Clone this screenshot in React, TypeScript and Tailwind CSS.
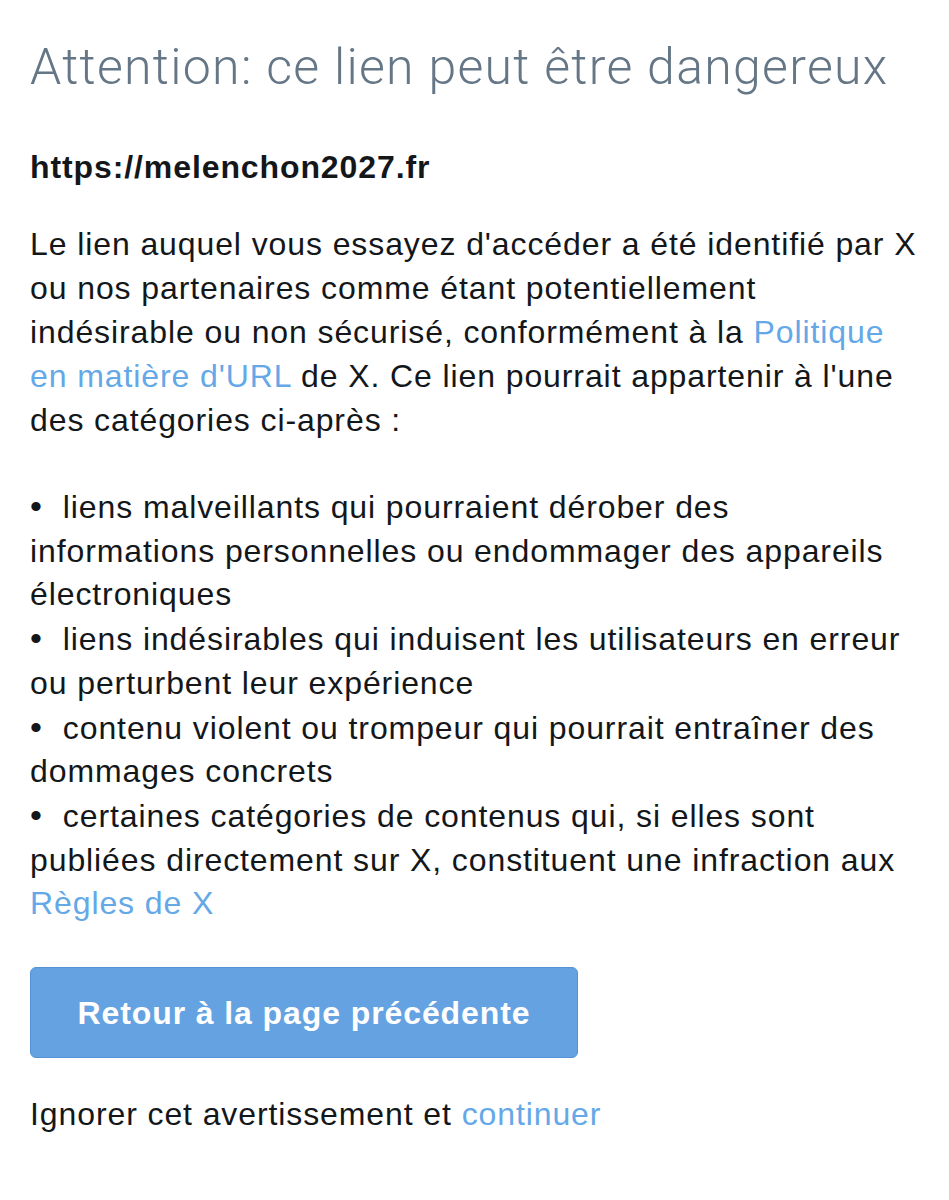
import React from 'react'

const Link = ({ children }: { children: React.ReactNode }) => (
    <a href="#" className="text-[#64a8e8]">{children}</a>
)

const bullets: React.ReactNode[] = [
    <>liens malveillants qui pourraient dérober des<br />informations personnelles ou endommager des appareils<br />électroniques</>,
    <>liens indésirables qui induisent les utilisateurs en erreur<br />ou perturbent leur expérience</>,
    <>contenu violent ou trompeur qui pourrait entraîner des<br />dommages concrets</>,
    <>certaines catégories de contenus qui, si elles sont<br />publiées directement sur X, constituent une infraction aux<br /><Link>Règles de X</Link></>,
]

export default function App() {
    return (
        <div className="min-h-screen bg-white font-['Liberation_Sans',Arial,sans-serif] text-[32px] leading-[44px] tracking-[0.9px] text-[#14171a]">
            <div className="px-[30px] pt-[34px] whitespace-nowrap">
                <h1 className="font-['Roboto',sans-serif] text-[50px] font-light leading-[66px] tracking-[1.3px] text-[#657786]">
                    Attention: ce lien peut être dangereux
                </h1>

                <p className="mt-[45px] font-bold">https://melenchon2027.fr</p>

                <p className="mt-[33px]">
                    Le lien auquel vous essayez d'accéder a été identifié par X<br />
                    ou nos partenaires comme étant potentiellement<br />
                    indésirable ou non sécurisé, conformément à la <Link>Politique<br />en matière d'URL</Link> de X. Ce lien pourrait appartenir à l'une<br />
                    des catégories ci-après :
                </p>

                <ul className="mt-[43px] leading-[43.7px]">
                    {bullets.map((b, i) => (
                        <li key={i}>
                            <span className="mr-[20px] text-[34px]">•</span>{b}
                        </li>
                    ))}
                </ul>

                <button className="mt-[41px] h-[91px] w-[548px] rounded-[6px] border border-[#5592d4] bg-[#65a2e2] font-bold text-white">
                    Retour à la page précédente
                </button>

                <p className="mt-[34px]">
                    Ignorer cet avertissement et <Link>continuer</Link>
                </p>
            </div>
        </div>
    )
}
